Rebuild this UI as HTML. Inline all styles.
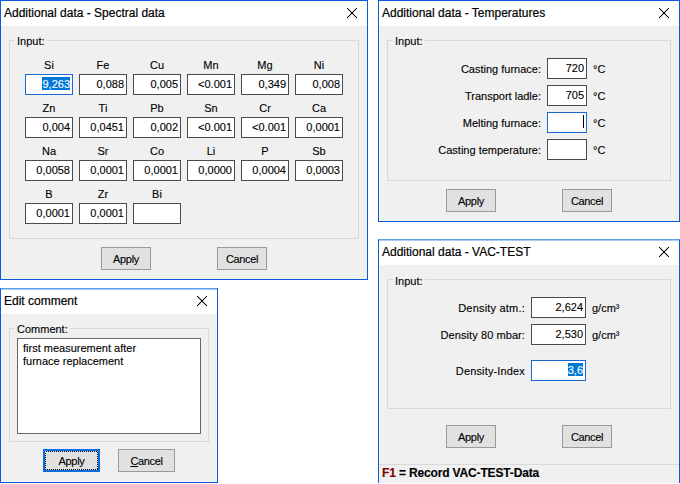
<!DOCTYPE html>
<html><head><meta charset="utf-8"><style>
html,body{margin:0;padding:0;background:#fff;width:680px;height:484px;overflow:hidden;position:relative}
*{box-sizing:border-box}
.dlg{position:absolute;background:#f0f0f0;border-left:1px solid #0b5cd8;border-right:1px solid #0b5cd8}
.tb{position:absolute;background:#fff}
.t{position:absolute;font-family:"Liberation Sans",sans-serif;white-space:pre;color:#000;-webkit-text-stroke-width:0.12px}
.ic{position:absolute}
.grp{position:absolute;border:1px solid #d9d9d9}
.fld{position:absolute;background:#fff;border:1px solid #4a4a4a}
.btn{position:absolute;background:#e1e1e1;border:1px solid #9a9a9a}
</style></head><body>
<div class="dlg" style="left:0px;top:0px;width:368px;height:280px;border-top:1px solid #0b5cd8;border-bottom:1px solid #0b5cd8;"></div>
<div class="tb" style="left:1px;top:1px;width:366px;height:25px"></div>
<div class="t" style="left:4px;top:6px;font-size:12px;line-height:14px;-webkit-text-stroke-width:0.2px;">Additional data - Spectral data</div>
<svg class="ic" style="left:346px;top:7px" width="12" height="12" viewBox="-1 -1 12 12"><path d="M0.3 0.3L9.7 9.7M9.7 0.3L0.3 9.7" stroke="#000" stroke-opacity="0.35" stroke-width="1.5" fill="none"/><g shape-rendering="crispEdges" fill="#000"><rect x="0" y="0" width="1" height="1"/><rect x="9" y="0" width="1" height="1"/><rect x="1" y="1" width="1" height="1"/><rect x="8" y="1" width="1" height="1"/><rect x="2" y="2" width="1" height="1"/><rect x="7" y="2" width="1" height="1"/><rect x="3" y="3" width="1" height="1"/><rect x="6" y="3" width="1" height="1"/><rect x="4" y="4" width="1" height="1"/><rect x="5" y="4" width="1" height="1"/><rect x="5" y="5" width="1" height="1"/><rect x="4" y="5" width="1" height="1"/><rect x="6" y="6" width="1" height="1"/><rect x="3" y="6" width="1" height="1"/><rect x="7" y="7" width="1" height="1"/><rect x="2" y="7" width="1" height="1"/><rect x="8" y="8" width="1" height="1"/><rect x="1" y="8" width="1" height="1"/><rect x="9" y="9" width="1" height="1"/><rect x="0" y="9" width="1" height="1"/></g></svg>
<div class="grp" style="left:9px;top:40px;width:350px;height:199px"></div>
<div class="t" style="left:15px;top:35px;font-size:11px;line-height:13px;background:#f0f0f0;padding:0 2px;">Input:</div>
<div class="t" style="left:25px;top:59px;font-size:11px;line-height:13px;width:48px;text-align:center;">Si</div>
<div class="fld" style="left:25px;top:74px;width:48px;height:21px;border-color:#1a6ad6"></div>
<div class="t" style="left:25px;top:78px;font-size:11px;line-height:13px;width:45px;text-align:right;"><span style="background:#0078d7;color:#fff;padding:1px 0 0 0">9,263</span></div>
<div class="t" style="left:79px;top:59px;font-size:11px;line-height:13px;width:48px;text-align:center;">Fe</div>
<div class="fld" style="left:79px;top:74px;width:48px;height:21px;border-color:#4a4a4a"></div>
<div class="t" style="left:79px;top:78px;font-size:11px;line-height:13px;width:45px;text-align:right;">0,088</div>
<div class="t" style="left:133px;top:59px;font-size:11px;line-height:13px;width:48px;text-align:center;">Cu</div>
<div class="fld" style="left:133px;top:74px;width:48px;height:21px;border-color:#4a4a4a"></div>
<div class="t" style="left:133px;top:78px;font-size:11px;line-height:13px;width:45px;text-align:right;">0,005</div>
<div class="t" style="left:187px;top:59px;font-size:11px;line-height:13px;width:48px;text-align:center;">Mn</div>
<div class="fld" style="left:187px;top:74px;width:48px;height:21px;border-color:#4a4a4a"></div>
<div class="t" style="left:187px;top:78px;font-size:11px;line-height:13px;width:45px;text-align:right;">&lt;0.001</div>
<div class="t" style="left:241px;top:59px;font-size:11px;line-height:13px;width:48px;text-align:center;">Mg</div>
<div class="fld" style="left:241px;top:74px;width:48px;height:21px;border-color:#4a4a4a"></div>
<div class="t" style="left:241px;top:78px;font-size:11px;line-height:13px;width:45px;text-align:right;">0,349</div>
<div class="t" style="left:295px;top:59px;font-size:11px;line-height:13px;width:48px;text-align:center;">Ni</div>
<div class="fld" style="left:295px;top:74px;width:48px;height:21px;border-color:#4a4a4a"></div>
<div class="t" style="left:295px;top:78px;font-size:11px;line-height:13px;width:45px;text-align:right;">0,008</div>
<div class="t" style="left:25px;top:102px;font-size:11px;line-height:13px;width:48px;text-align:center;">Zn</div>
<div class="fld" style="left:25px;top:117px;width:48px;height:21px;border-color:#4a4a4a"></div>
<div class="t" style="left:25px;top:121px;font-size:11px;line-height:13px;width:45px;text-align:right;">0,004</div>
<div class="t" style="left:79px;top:102px;font-size:11px;line-height:13px;width:48px;text-align:center;">Ti</div>
<div class="fld" style="left:79px;top:117px;width:48px;height:21px;border-color:#4a4a4a"></div>
<div class="t" style="left:79px;top:121px;font-size:11px;line-height:13px;width:45px;text-align:right;">0,0451</div>
<div class="t" style="left:133px;top:102px;font-size:11px;line-height:13px;width:48px;text-align:center;">Pb</div>
<div class="fld" style="left:133px;top:117px;width:48px;height:21px;border-color:#4a4a4a"></div>
<div class="t" style="left:133px;top:121px;font-size:11px;line-height:13px;width:45px;text-align:right;">0,002</div>
<div class="t" style="left:187px;top:102px;font-size:11px;line-height:13px;width:48px;text-align:center;">Sn</div>
<div class="fld" style="left:187px;top:117px;width:48px;height:21px;border-color:#4a4a4a"></div>
<div class="t" style="left:187px;top:121px;font-size:11px;line-height:13px;width:45px;text-align:right;">&lt;0.001</div>
<div class="t" style="left:241px;top:102px;font-size:11px;line-height:13px;width:48px;text-align:center;">Cr</div>
<div class="fld" style="left:241px;top:117px;width:48px;height:21px;border-color:#4a4a4a"></div>
<div class="t" style="left:241px;top:121px;font-size:11px;line-height:13px;width:45px;text-align:right;">&lt;0.001</div>
<div class="t" style="left:295px;top:102px;font-size:11px;line-height:13px;width:48px;text-align:center;">Ca</div>
<div class="fld" style="left:295px;top:117px;width:48px;height:21px;border-color:#4a4a4a"></div>
<div class="t" style="left:295px;top:121px;font-size:11px;line-height:13px;width:45px;text-align:right;">0,0001</div>
<div class="t" style="left:25px;top:145px;font-size:11px;line-height:13px;width:48px;text-align:center;">Na</div>
<div class="fld" style="left:25px;top:160px;width:48px;height:21px;border-color:#4a4a4a"></div>
<div class="t" style="left:25px;top:164px;font-size:11px;line-height:13px;width:45px;text-align:right;">0,0058</div>
<div class="t" style="left:79px;top:145px;font-size:11px;line-height:13px;width:48px;text-align:center;">Sr</div>
<div class="fld" style="left:79px;top:160px;width:48px;height:21px;border-color:#4a4a4a"></div>
<div class="t" style="left:79px;top:164px;font-size:11px;line-height:13px;width:45px;text-align:right;">0,0001</div>
<div class="t" style="left:133px;top:145px;font-size:11px;line-height:13px;width:48px;text-align:center;">Co</div>
<div class="fld" style="left:133px;top:160px;width:48px;height:21px;border-color:#4a4a4a"></div>
<div class="t" style="left:133px;top:164px;font-size:11px;line-height:13px;width:45px;text-align:right;">0,0001</div>
<div class="t" style="left:187px;top:145px;font-size:11px;line-height:13px;width:48px;text-align:center;">Li</div>
<div class="fld" style="left:187px;top:160px;width:48px;height:21px;border-color:#4a4a4a"></div>
<div class="t" style="left:187px;top:164px;font-size:11px;line-height:13px;width:45px;text-align:right;">0,0000</div>
<div class="t" style="left:241px;top:145px;font-size:11px;line-height:13px;width:48px;text-align:center;">P</div>
<div class="fld" style="left:241px;top:160px;width:48px;height:21px;border-color:#4a4a4a"></div>
<div class="t" style="left:241px;top:164px;font-size:11px;line-height:13px;width:45px;text-align:right;">0,0004</div>
<div class="t" style="left:295px;top:145px;font-size:11px;line-height:13px;width:48px;text-align:center;">Sb</div>
<div class="fld" style="left:295px;top:160px;width:48px;height:21px;border-color:#4a4a4a"></div>
<div class="t" style="left:295px;top:164px;font-size:11px;line-height:13px;width:45px;text-align:right;">0,0003</div>
<div class="t" style="left:25px;top:188px;font-size:11px;line-height:13px;width:48px;text-align:center;">B</div>
<div class="fld" style="left:25px;top:203px;width:48px;height:21px;border-color:#4a4a4a"></div>
<div class="t" style="left:25px;top:207px;font-size:11px;line-height:13px;width:45px;text-align:right;">0,0001</div>
<div class="t" style="left:79px;top:188px;font-size:11px;line-height:13px;width:48px;text-align:center;">Zr</div>
<div class="fld" style="left:79px;top:203px;width:48px;height:21px;border-color:#4a4a4a"></div>
<div class="t" style="left:79px;top:207px;font-size:11px;line-height:13px;width:45px;text-align:right;">0,0001</div>
<div class="t" style="left:133px;top:188px;font-size:11px;line-height:13px;width:48px;text-align:center;">Bi</div>
<div class="fld" style="left:133px;top:203px;width:48px;height:21px;border-color:#4a4a4a"></div>
<div class="btn" style="left:101px;top:247px;width:50px;height:23px"></div>
<div class="t" style="left:101px;top:253px;font-size:11px;line-height:13px;width:50px;text-align:center;letter-spacing:-0.35px;">Apply</div>
<div class="btn" style="left:217px;top:247px;width:50px;height:23px"></div>
<div class="t" style="left:217px;top:253px;font-size:11px;line-height:13px;width:50px;text-align:center;letter-spacing:-0.35px;">Cancel</div>
<div class="dlg" style="left:378px;top:0px;width:302px;height:222px;border-top:1px solid #0b5cd8;border-bottom:1px solid #0b5cd8;"></div>
<div class="tb" style="left:379px;top:1px;width:300px;height:25px"></div>
<div class="t" style="left:382px;top:6px;font-size:12px;line-height:14px;-webkit-text-stroke-width:0.2px;">Additional data - Temperatures</div>
<svg class="ic" style="left:658px;top:7px" width="12" height="12" viewBox="-1 -1 12 12"><path d="M0.3 0.3L9.7 9.7M9.7 0.3L0.3 9.7" stroke="#000" stroke-opacity="0.35" stroke-width="1.5" fill="none"/><g shape-rendering="crispEdges" fill="#000"><rect x="0" y="0" width="1" height="1"/><rect x="9" y="0" width="1" height="1"/><rect x="1" y="1" width="1" height="1"/><rect x="8" y="1" width="1" height="1"/><rect x="2" y="2" width="1" height="1"/><rect x="7" y="2" width="1" height="1"/><rect x="3" y="3" width="1" height="1"/><rect x="6" y="3" width="1" height="1"/><rect x="4" y="4" width="1" height="1"/><rect x="5" y="4" width="1" height="1"/><rect x="5" y="5" width="1" height="1"/><rect x="4" y="5" width="1" height="1"/><rect x="6" y="6" width="1" height="1"/><rect x="3" y="6" width="1" height="1"/><rect x="7" y="7" width="1" height="1"/><rect x="2" y="7" width="1" height="1"/><rect x="8" y="8" width="1" height="1"/><rect x="1" y="8" width="1" height="1"/><rect x="9" y="9" width="1" height="1"/><rect x="0" y="9" width="1" height="1"/></g></svg>
<div class="grp" style="left:387px;top:40px;width:284px;height:141px"></div>
<div class="t" style="left:393px;top:35px;font-size:11px;line-height:13px;background:#f0f0f0;padding:0 2px;">Input:</div>
<div class="t" style="left:401px;top:63px;font-size:11px;line-height:13px;width:140px;text-align:right;">Casting furnace:</div>
<div class="fld" style="left:547px;top:58px;width:40px;height:21px;border-color:#4a4a4a"></div>
<div class="t" style="left:547px;top:62px;font-size:11px;line-height:13px;width:37px;text-align:right;">720</div>
<div class="t" style="left:593px;top:63px;font-size:11px;line-height:13px;">°C</div>
<div class="t" style="left:401px;top:90px;font-size:11px;line-height:13px;width:140px;text-align:right;">Transport ladle:</div>
<div class="fld" style="left:547px;top:85px;width:40px;height:21px;border-color:#4a4a4a"></div>
<div class="t" style="left:547px;top:89px;font-size:11px;line-height:13px;width:37px;text-align:right;">705</div>
<div class="t" style="left:593px;top:90px;font-size:11px;line-height:13px;">°C</div>
<div class="t" style="left:401px;top:117px;font-size:11px;line-height:13px;width:140px;text-align:right;">Melting furnace:</div>
<div class="fld" style="left:547px;top:112px;width:40px;height:21px;border-color:#1a6ad6"></div>
<div style="position:absolute;left:583px;top:115px;width:1px;height:13px;background:#000"></div>
<div class="t" style="left:593px;top:117px;font-size:11px;line-height:13px;">°C</div>
<div class="t" style="left:401px;top:144px;font-size:11px;line-height:13px;width:140px;text-align:right;">Casting temperature:</div>
<div class="fld" style="left:547px;top:139px;width:40px;height:21px;border-color:#4a4a4a"></div>
<div class="t" style="left:593px;top:144px;font-size:11px;line-height:13px;">°C</div>
<div class="btn" style="left:446px;top:189px;width:50px;height:23px"></div>
<div class="t" style="left:446px;top:195px;font-size:11px;line-height:13px;width:50px;text-align:center;letter-spacing:-0.35px;">Apply</div>
<div class="btn" style="left:562px;top:189px;width:50px;height:23px"></div>
<div class="t" style="left:562px;top:195px;font-size:11px;line-height:13px;width:50px;text-align:center;letter-spacing:-0.35px;">Cancel</div>
<div class="dlg" style="left:0px;top:288px;width:218px;height:195px;border-top:1px solid #5a9fe8;border-bottom:1px solid #0b5cd8;"></div>
<div class="tb" style="left:1px;top:289px;width:216px;height:25px"></div>
<div style="position:absolute;left:1px;top:289px;width:216px;height:1px;background:#a9cdf2"></div>
<div class="t" style="left:4px;top:294px;font-size:12px;line-height:14px;-webkit-text-stroke-width:0.2px;">Edit comment</div>
<svg class="ic" style="left:196px;top:295px" width="12" height="12" viewBox="-1 -1 12 12"><path d="M0.3 0.3L9.7 9.7M9.7 0.3L0.3 9.7" stroke="#000" stroke-opacity="0.35" stroke-width="1.5" fill="none"/><g shape-rendering="crispEdges" fill="#000"><rect x="0" y="0" width="1" height="1"/><rect x="9" y="0" width="1" height="1"/><rect x="1" y="1" width="1" height="1"/><rect x="8" y="1" width="1" height="1"/><rect x="2" y="2" width="1" height="1"/><rect x="7" y="2" width="1" height="1"/><rect x="3" y="3" width="1" height="1"/><rect x="6" y="3" width="1" height="1"/><rect x="4" y="4" width="1" height="1"/><rect x="5" y="4" width="1" height="1"/><rect x="5" y="5" width="1" height="1"/><rect x="4" y="5" width="1" height="1"/><rect x="6" y="6" width="1" height="1"/><rect x="3" y="6" width="1" height="1"/><rect x="7" y="7" width="1" height="1"/><rect x="2" y="7" width="1" height="1"/><rect x="8" y="8" width="1" height="1"/><rect x="1" y="8" width="1" height="1"/><rect x="9" y="9" width="1" height="1"/><rect x="0" y="9" width="1" height="1"/></g></svg>
<div class="grp" style="left:9px;top:328px;width:200px;height:114px"></div>
<div class="t" style="left:15px;top:323px;font-size:11px;line-height:13px;background:#f0f0f0;padding:0 2px;">Comment:</div>
<div class="fld" style="left:17px;top:338px;width:184px;height:96px;border-color:#666"></div>
<div class="t" style="left:23px;top:342px;font-size:11px;line-height:13px;">first measurement after</div>
<div class="t" style="left:23px;top:355px;font-size:11px;line-height:13px;">furnace replacement</div>
<div class="btn" style="left:43px;top:449px;width:57px;height:23px;border:2px solid #0c6be0;background:#e1e1e1"></div>
<svg class="ic" style="left:45px;top:451px" width="53" height="19" viewBox="0 0 53 19" shape-rendering="crispEdges"><rect x="0.5" y="0.5" width="52" height="18" fill="none" stroke="#000" stroke-dasharray="1,1"/></svg>
<div class="t" style="left:43px;top:455px;font-size:11px;line-height:13px;width:57px;text-align:center;letter-spacing:-0.35px;">Apply</div>
<div class="btn" style="left:118px;top:449px;width:57px;height:23px"></div>
<div class="t" style="left:118px;top:455px;font-size:11px;line-height:13px;width:57px;text-align:center;letter-spacing:-0.35px;"><u>C</u>ancel</div>
<div class="dlg" style="left:378px;top:239px;width:302px;height:244px;border-top:1px solid #5a9fe8;"></div>
<div class="tb" style="left:379px;top:240px;width:300px;height:25px"></div>
<div style="position:absolute;left:379px;top:240px;width:300px;height:1px;background:#a9cdf2"></div>
<div class="t" style="left:382px;top:245px;font-size:12px;line-height:14px;-webkit-text-stroke-width:0.2px;">Additional data - VAC-TEST</div>
<svg class="ic" style="left:658px;top:246px" width="12" height="12" viewBox="-1 -1 12 12"><path d="M0.3 0.3L9.7 9.7M9.7 0.3L0.3 9.7" stroke="#000" stroke-opacity="0.35" stroke-width="1.5" fill="none"/><g shape-rendering="crispEdges" fill="#000"><rect x="0" y="0" width="1" height="1"/><rect x="9" y="0" width="1" height="1"/><rect x="1" y="1" width="1" height="1"/><rect x="8" y="1" width="1" height="1"/><rect x="2" y="2" width="1" height="1"/><rect x="7" y="2" width="1" height="1"/><rect x="3" y="3" width="1" height="1"/><rect x="6" y="3" width="1" height="1"/><rect x="4" y="4" width="1" height="1"/><rect x="5" y="4" width="1" height="1"/><rect x="5" y="5" width="1" height="1"/><rect x="4" y="5" width="1" height="1"/><rect x="6" y="6" width="1" height="1"/><rect x="3" y="6" width="1" height="1"/><rect x="7" y="7" width="1" height="1"/><rect x="2" y="7" width="1" height="1"/><rect x="8" y="8" width="1" height="1"/><rect x="1" y="8" width="1" height="1"/><rect x="9" y="9" width="1" height="1"/><rect x="0" y="9" width="1" height="1"/></g></svg>
<div class="grp" style="left:387px;top:279px;width:284px;height:130px"></div>
<div class="t" style="left:393px;top:275px;font-size:11px;line-height:13px;background:#f0f0f0;padding:0 2px;">Input:</div>
<div class="t" style="left:400px;top:302px;font-size:11px;line-height:13px;width:125px;text-align:right;letter-spacing:0.2px;">Density atm.:</div>
<div class="fld" style="left:531px;top:297px;width:55px;height:21px;border-color:#4a4a4a"></div>
<div class="t" style="left:531px;top:301px;font-size:11px;line-height:13px;width:52px;text-align:right;">2,624</div>
<div class="t" style="left:592px;top:302px;font-size:11px;line-height:13px;">g/cm³</div>
<div class="t" style="left:400px;top:329px;font-size:11px;line-height:13px;width:125px;text-align:right;letter-spacing:0.08px;">Density 80 mbar:</div>
<div class="fld" style="left:531px;top:324px;width:55px;height:21px;border-color:#4a4a4a"></div>
<div class="t" style="left:531px;top:328px;font-size:11px;line-height:13px;width:52px;text-align:right;">2,530</div>
<div class="t" style="left:592px;top:329px;font-size:11px;line-height:13px;">g/cm³</div>
<div class="t" style="left:400px;top:365px;font-size:11px;line-height:13px;width:125px;text-align:right;letter-spacing:0.15px;">Density-Index</div>
<div class="fld" style="left:531px;top:360px;width:55px;height:21px;border-color:#1a6ad6"></div>
<div class="t" style="left:531px;top:364px;font-size:11px;line-height:13px;width:52px;text-align:right;"><span style="background:#0078d7;color:#fff;padding:1px 0 0 0">3,6</span></div>
<div class="btn" style="left:446px;top:425px;width:50px;height:23px"></div>
<div class="t" style="left:446px;top:431px;font-size:11px;line-height:13px;width:50px;text-align:center;letter-spacing:-0.35px;">Apply</div>
<div class="btn" style="left:562px;top:425px;width:50px;height:23px"></div>
<div class="t" style="left:562px;top:431px;font-size:11px;line-height:13px;width:50px;text-align:center;letter-spacing:-0.35px;">Cancel</div>
<div style="position:absolute;left:379px;top:464px;width:300px;height:1px;background:#dadada"></div>
<div class="t" style="left:382px;top:466px;font-size:12px;line-height:14px;font-weight:bold;letter-spacing:-0.15px;"><span style="color:#800000">F1</span> = Record VAC-TEST-Data</div>
</body></html>
